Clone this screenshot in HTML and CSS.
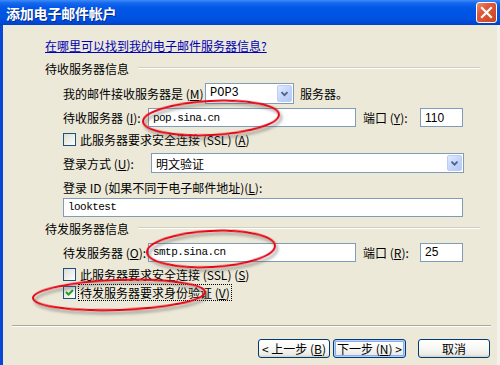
FILE: index.html
```html
<!DOCTYPE html>
<html lang="zh-CN">
<head>
<meta charset="utf-8">
<title>添加电子邮件帐户</title>
<link rel="stylesheet" href="styles.css">
</head>
<body>
<div class="window">
  <div class="titlebar">
    <span class="title">添加电子邮件帐户</span>
    <span class="close"><svg width="19" height="19" viewBox="0 0 19 19"><path d="M5 5 L14 14 M14 5 L5 14" stroke="#fff" stroke-width="2.2" stroke-linecap="square"/></svg></span>
  </div>
  <div class="body">
    <div class="content">
      <div class="row link-row"><span class="link">在哪里可以找到我的电子邮件服务器信息?</span></div>

      <div class="row group-head h26"><span>待收服务器信息</span><span class="gline"></span></div>

      <div class="row indent h24">
        <span class="lbl w142">我的邮件接收服务器是 (<u>M</u>)</span>
        <span class="select w89 tall"><span class="val mono big">POP3</span><span class="drop"><svg width="15" height="17" viewBox="0 0 15 17"><path d="M4 7 L7.5 10.5 L11 7" fill="none" stroke="#4d6185" stroke-width="2"/></svg></span></span>
        <span class="after">服务器。</span>
      </div>

      <div class="row indent h25">
        <span class="lbl w85">待收服务器 (<u>I</u>):</span>
        <span class="input w208"><span class="mono">pop.sina.cn</span></span>
        <span class="lbl port">端口 (<u>Y</u>):</span>
        <span class="input w43"><span class="num">110</span></span>
      </div>

      <div class="row indent h18">
        <span class="check"></span>
        <span class="ctext">此服务器要求安全连接 (SSL) (<u>A</u>)</span>
      </div>

      <div class="row indent h30">
        <span class="lbl w88">登录方式 (<u>U</u>):</span>
        <span class="select w313"><span class="val">明文验证</span><span class="drop"><svg width="15" height="16" viewBox="0 0 15 16"><path d="M4 6.5 L7.5 10 L11 6.5" fill="none" stroke="#4d6185" stroke-width="2"/></svg></span></span>
      </div>

      <div class="row indent h18">
        <span class="lbl">登录 ID (如果不同于电子邮件地址)(<u>L</u>):</span>
      </div>

      <div class="row indent h22">
        <span class="input w400"><span class="mono">looktest</span></span>
      </div>

      <div class="row group-head h20"><span>待发服务器信息</span><span class="gline"></span></div>

      <div class="row indent h28">
        <span class="lbl w85">待发服务器 (<u>O</u>):</span>
        <span class="input w208"><span class="mono">smtp.sina.cn</span></span>
        <span class="lbl port">端口 (<u>R</u>):</span>
        <span class="input w43"><span class="num">25</span></span>
      </div>

      <div class="row indent h16">
        <span class="check"></span>
        <span class="ctext">此服务器要求安全连接 (SSL) (<u>S</u>)</span>
      </div>

      <div class="row indent h20">
        <span class="check"><svg width="11" height="11" viewBox="0 0 11 11"><path d="M2 5 L4.5 7.5 L9 3" fill="none" stroke="#21a121" stroke-width="2"/></svg></span>
        <span class="ctext focus">待发服务器要求身份验证 (<u>V</u>)</span>
      </div>
    </div>

    <div class="sep"></div>

    <div class="buttons">
      <span class="btn">&lt; 上一步 (<u>B</u>)</span>
      <span class="btn default">下一步 (<u>N</u>) &gt;</span>
      <span class="btn cancel">取消</span>
    </div>
  </div>

  <svg class="marks" width="500" height="365" viewBox="0 0 500 365">
    <defs>
      <filter id="sh" x="-20%" y="-50%" width="140%" height="200%">
        <feDropShadow dx="2" dy="3" stdDeviation="1.6" flood-color="#555" flood-opacity="0.6"/>
      </filter>
    </defs>
    <ellipse cx="211" cy="118" rx="68" ry="17" transform="rotate(-3 211 118)" fill="none" stroke="#e60012" stroke-width="2" filter="url(#sh)"/>
    <ellipse cx="211" cy="249" rx="64" ry="18" transform="rotate(-3 211 249)" fill="none" stroke="#e60012" stroke-width="2" filter="url(#sh)"/>
    <ellipse cx="119" cy="295" rx="86" ry="15" transform="rotate(-2 119 295)" fill="none" stroke="#e60012" stroke-width="2" filter="url(#sh)"/>
  </svg>
</div>
</body>
</html>
```

FILE: styles.css
```css
* { box-sizing: border-box; }
html, body { margin: 0; padding: 0; }
body {
  width: 500px;
  height: 365px;
  overflow: hidden;
  font-family: "Noto Sans CJK SC", "Liberation Sans", sans-serif;
  font-size: 12px;
  color: #000;
}
u { text-decoration: underline; }

.window {
  position: relative;
  width: 500px;
  height: 365px;
  display: flex;
  flex-direction: column;
  background: #ece9d8;
}

.titlebar {
  height: 25px;
  flex: none;
  display: flex;
  align-items: center;
  justify-content: space-between;
  padding: 0 3px 0 6px;
  background: linear-gradient(#3d8cf7 0, #1668ee 3px, #0058e6 8px, #0055e5 14px, #0052df 19px, #0046d4 23px, #0040c8 25px);
}
.title {
  color: #fff;
  font-weight: bold;
  font-size: 14px;
  line-height: 1;
  letter-spacing: -0.2px;
  text-shadow: 1px 1px 0 #0a2a8a;
}
.close {
  width: 21px;
  height: 21px;
  border: 1px solid #fff;
  border-radius: 3px;
  background: linear-gradient(135deg, #ea8f70 0%, #e0593a 35%, #cc4420 100%);
  display: flex;
  align-items: center;
  justify-content: center;
}

.body {
  flex: 1;
  display: flex;
  flex-direction: column;
  border-left: 3px solid #0a46d6;
  border-right: 3px solid #f3f1e8;
}

.content {
  padding: 10px 17px 0 42px;
  display: flex;
  flex-direction: column;
}

.row {
  display: flex;
  align-items: center;
  white-space: nowrap;
}
.indent { padding-left: 18px; }
.link-row { height: 20px; }
.h16 { height: 16px; }
.h18 { height: 18px; }
.h20 { height: 20px; }
.h22 { height: 22px; }
.h24 { height: 24px; }
.h25 { height: 25px; }
.h26 { height: 26px; }
.h28 { height: 28px; }
.h30 { height: 30px; }

.link {
  color: #0000b4;
  text-decoration: underline;
}

.group-head .gline {
  flex: 1;
  margin-left: 9px;
  height: 2px;
  border-top: 1px solid #d0d0bf;
  border-bottom: 1px solid #fff;
}

.lbl { flex: none; }
.w85 { width: 85px; }
.w88 { width: 88px; }
.w142 { width: 142px; }
.port { width: 57px; margin-left: 7px; }

.input, .select {
  flex: none;
  height: 19px;
  background: #fff;
  border: 1px solid #7f9db9;
  display: flex;
  align-items: center;
  padding-left: 4px;
}
.w208 { width: 208px; }
.w43 { width: 43px; }
.w400 { width: 400px; height: 19px; }
.w89 { width: 89px; }
.w313 { width: 313px; height: 20px; }
.tall { height: 21px; }

.select { justify-content: space-between; padding-right: 1px; }
.select .val { flex: 1; }
.drop {
  width: 15px;
  align-self: stretch;
  margin: 1px 0;
  border-radius: 2px;
  border: 1px solid #bccef6;
  background: linear-gradient(135deg, #e2eafe 0%, #c6d6fb 50%, #b4c8f6 100%);
  display: flex;
  align-items: center;
  justify-content: center;
}
.drop svg { display: block; }

.mono {
  font-family: "Liberation Mono", "DejaVu Sans Mono", monospace;
  font-size: 11px;
  letter-spacing: -0.55px;
}
.mono.big { font-size: 12px; letter-spacing: 0; }
.num {
  font-family: "Liberation Sans", Arial, sans-serif;
  font-size: 12px;
}
.after { margin-left: 6px; }

.check {
  flex: none;
  width: 13px;
  height: 13px;
  border: 1px solid #1c5180;
  background: linear-gradient(135deg, #dcdcd7 0%, #f4f4f0 70%, #fff 100%);
  display: flex;
  align-items: center;
  justify-content: center;
}
.check svg { display: block; }
.ctext { margin-left: 3px; padding: 0 1px; line-height: 15px; }
.focus { outline: 1px dotted #000; outline-offset: 0; }

.sep {
  margin: 23px 6px 0 9px;
  height: 2px;
  border-top: 1px solid #aca899;
  border-bottom: 1px solid #fff;
}

.buttons {
  display: flex;
  justify-content: flex-end;
  gap: 3px;
  padding: 12px 7px 0 0;
}
.btn {
  flex: none;
  width: 72px;
  height: 19px;
  border: 1px solid #003c74;
  border-radius: 3px;
  background: linear-gradient(#ffffff 0%, #f7f7f4 50%, #ecebe6 85%, #d6d0c5 100%);
  display: flex;
  align-items: center;
  justify-content: center;
  line-height: 1;
  white-space: nowrap;
}
.btn.default {
  width: 73px;
  box-shadow: inset 0 0 0 1px #b8d0f8, inset 0 0 0 2px #89adf0;
}
.btn.cancel { margin-left: 9px; }

.marks {
  position: absolute;
  left: 0;
  top: 0;
  pointer-events: none;
}
```
